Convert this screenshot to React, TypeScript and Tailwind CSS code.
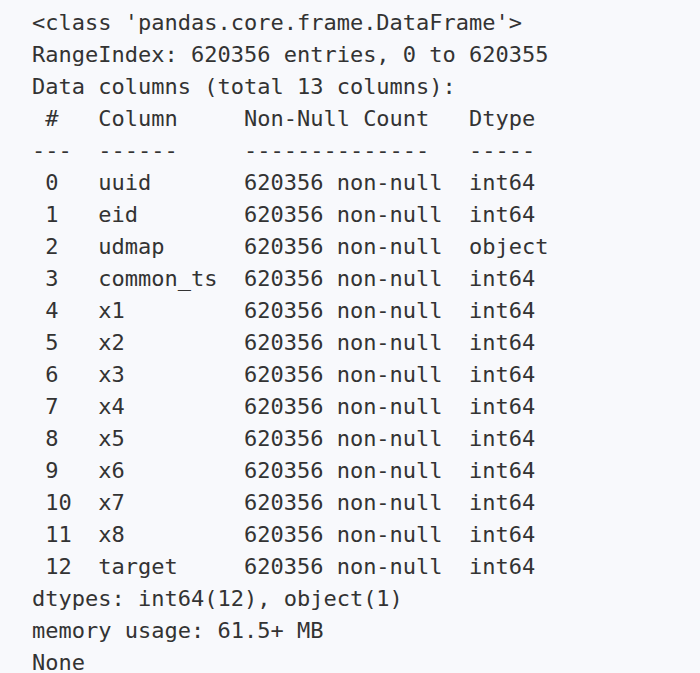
import React from "react";

const lines = [
  "<class 'pandas.core.frame.DataFrame'>",
  "RangeIndex: 620356 entries, 0 to 620355",
  "Data columns (total 13 columns):",
  " #   Column     Non-Null Count   Dtype ",
  "---  ------     --------------   ----- ",
  " 0   uuid       620356 non-null  int64 ",
  " 1   eid        620356 non-null  int64 ",
  " 2   udmap      620356 non-null  object",
  " 3   common_ts  620356 non-null  int64 ",
  " 4   x1         620356 non-null  int64 ",
  " 5   x2         620356 non-null  int64 ",
  " 6   x3         620356 non-null  int64 ",
  " 7   x4         620356 non-null  int64 ",
  " 8   x5         620356 non-null  int64 ",
  " 9   x6         620356 non-null  int64 ",
  " 10  x7         620356 non-null  int64 ",
  " 11  x8         620356 non-null  int64 ",
  " 12  target     620356 non-null  int64 ",
  "dtypes: int64(12), object(1)",
  "memory usage: 61.5+ MB",
  "None",
];

export default function App() {
  return (
    <div className="w-[700px] h-[673px] overflow-hidden bg-[#f8f9fc]">
      <pre className="pl-[32px] pt-[7px] m-0 font-['DejaVu_Sans_Mono',monospace] text-[22px] leading-[32px] text-[#333333]">
        {lines.join("\n")}
      </pre>
    </div>
  );
}
